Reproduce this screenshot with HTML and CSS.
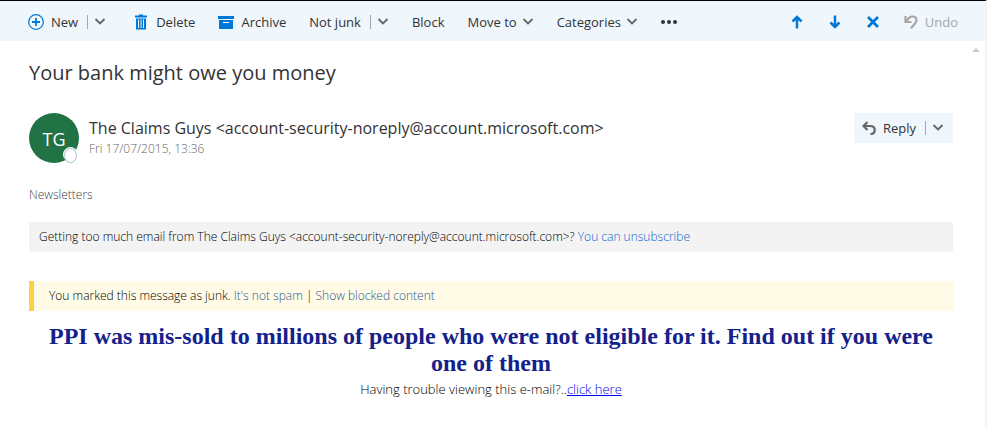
FILE: index.html
```html
<!DOCTYPE html>
<html lang="en">
<head>
<meta charset="utf-8">
<title>Your bank might owe you money</title>
<link rel="stylesheet" href="styles.css">
</head>
<body>
<svg class="sprite" aria-hidden="true">
  <symbol id="chevron" viewBox="0 0 12 12"><path d="M1.500 3 6 7.500 10.500 3" fill="none" stroke="currentColor" stroke-width="1.800"/></symbol>
  <symbol id="arrow" viewBox="0 0 14 14"><path d="M7 13.500V2M2.500 6.500 7 2l4.500 4.500" fill="none" stroke="currentColor" stroke-width="2.500"/></symbol>
</svg>
<header class="toolbar">
  <div class="group">
    <div class="split primary">
      <button class="cmd"><svg class="icon blue" viewBox="0 0 16 16"><circle cx="8" cy="8" r="7.300" fill="none" stroke="currentColor" stroke-width="1.200"/><path d="M8 4v8M4 8h8" stroke="currentColor" stroke-width="1.800"/></svg>New</button>
      <span class="bar"></span>
      <button class="cmd" aria-label="New options"><svg class="chev"><use href="#chevron"/></svg></button>
    </div>
    <button class="cmd"><svg class="icon blue" viewBox="0 0 16 16"><path d="M2 1.500h4V.5h4v1h4V3.500H2zM3 4.500h10V15.500H3z" fill="currentColor"/><path d="M5.500 5.500v8.500M8 5.500v8.500M10.500 5.500v8.500" stroke="#eff6fc"/></svg>Delete</button>
    <button class="cmd"><svg class="icon blue" viewBox="0 0 16 16"><path d="M0 2h16v3H0zM1 6h14v9H1z" fill="currentColor"/><path d="M5 8.500h6" stroke="#fff"/></svg>Archive</button>
    <div class="split">
      <button class="cmd">Not junk</button>
      <span class="bar"></span>
      <button class="cmd" aria-label="Junk options"><svg class="chev"><use href="#chevron"/></svg></button>
    </div>
    <button class="cmd">Block</button>
    <button class="cmd tight">Move to<svg class="chev"><use href="#chevron"/></svg></button>
    <button class="cmd tight">Categories<svg class="chev"><use href="#chevron"/></svg></button>
    <button class="cmd" aria-label="More commands"><svg class="icon" viewBox="0 0 16 16"><g fill="currentColor"><circle cx="2" cy="8" r="2"/><circle cx="8" cy="8" r="2"/><circle cx="14" cy="8" r="2"/></g></svg></button>
  </div>
  <div class="group nav">
    <button class="cmd" aria-label="Previous message"><svg class="nav-icon blue"><use href="#arrow"/></svg></button>
    <button class="cmd" aria-label="Next message"><svg class="nav-icon blue down"><use href="#arrow"/></svg></button>
    <button class="cmd" aria-label="Close"><svg class="nav-icon blue" viewBox="0 0 14 14"><path d="M2 2l10 10M12 2 2 12" stroke="currentColor" stroke-width="2.800"/></svg></button>
    <button class="cmd" disabled><svg class="nav-icon" viewBox="0 0 14 14"><path d="M1.500 1v6h6M2 6.500C4 3.500 6 1.500 8.500 1.500c2.500 0 4 1.700 4 3.700 0 2.500-2.500 4.300-5.500 8" fill="none" stroke="currentColor" stroke-width="2.200"/></svg>Undo</button>
  </div>
</header>
<main class="message">
  <svg class="scroll-up" viewBox="0 0 8 4" aria-hidden="true"><path d="M4 0l4 4H0z" fill="#c8cdd0"/></svg>
  <h1 class="subject">Your bank might owe you money</h1>
  <section class="sender">
    <div class="avatar">TG<span class="presence"></span></div>
    <div class="who">
      <div class="from">The Claims Guys &lt;account-security-noreply@account.microsoft.com&gt;</div>
      <time class="date" datetime="2015-07-17T13:36">Fri 17/07/2015, 13:36</time>
    </div>
    <div class="reply split">
      <button class="cmd"><svg class="nav-icon gray" viewBox="0 0 14 14"><path d="M5.500 1 1.500 5l4 4M1.500 5H8c3 0 4.700 1.500 4.700 4S11 13 8.500 13" fill="none" stroke="currentColor" stroke-width="2.200"/></svg>Reply</button>
      <span class="bar"></span>
      <button class="cmd" aria-label="Reply options"><svg class="chev"><use href="#chevron"/></svg></button>
    </div>
  </section>
  <div class="category">Newsletters</div>
  <p class="notice">Getting too much email from The Claims Guys &lt;account-security-noreply@account.microsoft.com&gt;? <a class="unsubscribe" href="#">You can unsubscribe</a></p>
  <p class="warning">You marked this message as junk. <a href="#">It's not spam</a> | <a href="#">Show blocked content</a></p>
  <article class="body">
    <h2 class="headline">PPI was mis-sold to millions of people who were not eligible for it. Find out if you were one of them</h2>
    <p class="trouble">Having trouble viewing this e-mail?..<a href="#">click here</a></p>
  </article>
</main>
</body>
</html>
```
FILE: styles.css
```css
* { box-sizing: border-box; }
html { min-height: 100%; background: #fff; }
body {
  margin: 0;
  min-height: 100vh;
  border-top: 1px solid #000;
  border-right: 2px solid #f3f3f3;
  font-family: "Open Sans", "Noto Sans", sans-serif;
  font-size: 13px;
  line-height: 20px;
  color: #333;
}
h1, h2, p { margin: 0; font-weight: 400; }
a { color: #2b579a; text-decoration: none; }
button {
  padding: 0;
  border: 0;
  background: none;
  font: inherit;
  color: inherit;
}
.sprite { display: none; }
.toolbar {
  display: flex;
  justify-content: space-between;
  height: 40px;
  padding: 2px 27px 0 28px;
  background: #eff6fc;
}
.group, .split, .cmd { display: flex; align-items: center; }
.group { gap: 23px; }
.nav { gap: 24px; }
.cmd { gap: 7px; white-space: nowrap; }
.cmd:disabled { color: #a6a6a6; }
.tight { gap: 5px; }
.split { gap: 6px; }
.primary { margin-right: 4px; }
.bar { width: 1px; height: 14px; margin-left: 3px; background: #a6a6a6; }
.icon { width: 16px; height: 16px; }
.nav-icon { width: 14px; height: 14px; }
.down { transform: rotate(180deg); }
.chev { width: 12px; height: 12px; color: #666; }
.blue { color: #0078d7; }
.gray { color: #666; }
.message { position: relative; padding: 16px 32px 0 29px; }
.scroll-up { position: absolute; top: 7px; right: 5px; width: 8px; height: 4px; }
.subject { font-size: 20px; line-height: 32px; }
.sender { display: flex; align-items: flex-start; margin-top: 24px; }
.avatar {
  position: relative;
  width: 50px;
  height: 50px;
  border-radius: 50%;
  background: #217346;
  color: #fff;
  font-size: 18px;
  line-height: 52px;
  text-align: center;
}
.presence {
  position: absolute;
  right: 1px;
  bottom: 1px;
  width: 15px;
  height: 15px;
  border: 1px solid #fff;
  border-radius: 50%;
  background: #fff;
}
.presence::before {
  content: "";
  display: block;
  height: 13px;
  border: 1px solid #b1c8d6;
  border-radius: 50%;
}
.who { flex: 1; padding: 3px 0 0 10px; }
.from { font-size: 16px; line-height: 24px; }
.date { display: block; font-size: 12px; line-height: 18px; font-weight: 350; color: #666; }
.reply { height: 30px; padding: 0 9px 0 8px; background: #eff6fc; }
.category { margin-top: 22px; font-size: 12px; font-weight: 350; color: #444; }
.notice, .warning { font-size: 12px; line-height: 30px; font-weight: 350; color: #000; }
.notice { margin-top: 17px; padding-left: 10px; background: #f3f3f3; }
.warning { margin-top: 29px; padding-left: 15px; border-left: 5px solid #fdd045; background: #fffbe6; }
.unsubscribe { color: #0a66cf; }
.body { padding: 12px 16px 0; text-align: center; }
.headline {
  font-family: "Liberation Serif", serif;
  font-size: 24px;
  line-height: 27px;
  font-weight: 700;
  color: #14218b;
}
.trouble { font-size: 13px; line-height: 24px; font-weight: 350; color: #000; }
.trouble a { color: #00e; text-decoration: underline; }
```
